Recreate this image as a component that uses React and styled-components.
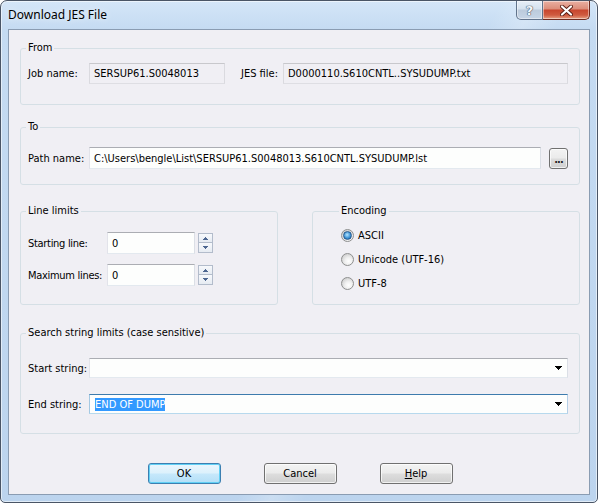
import React from "react";
import styled, { createGlobalStyle } from "styled-components";

const UI_FONT = `Tahoma, "DejaVu Sans Condensed", "Liberation Sans", sans-serif`;

const GlobalStyle = createGlobalStyle`
  html, body {
    margin: 0;
    padding: 0;
    background: #ffffff;
  }
  * {
    box-sizing: border-box;
  }
`;

const Window = styled.div`
  width: 598px;
  height: 503px;
  display: flex;
  flex-direction: column;
  padding: 0 7px 7px;
  border: 1px solid #4a5566;
  border-radius: 7px 7px 5px 5px;
  background:
    linear-gradient(118deg, transparent 58%, rgba(255, 255, 255, 0.22) 62%, transparent 66%),
    linear-gradient(180deg, #d4e6f8 0px, #c5dbf2 28px, #bcd4ee 100%);
  box-shadow: inset 0 0 0 1px rgba(255, 255, 255, 0.55);
  overflow: hidden;
`;

const TitleBar = styled.div`
  height: 28px;
  display: flex;
  justify-content: space-between;
  align-items: flex-start;
`;

const Title = styled.div`
  padding-top: 6px;
  font-family: "Noto Sans", "Open Sans", sans-serif;
  font-size: 12px;
  line-height: 16px;
  color: #000;
  text-shadow: 0 0 6px rgba(255, 255, 255, 0.9);
`;

const CaptionGroup = styled.div`
  display: flex;
`;

const CaptionButton = styled.div`
  width: ${(p) => p.$w}px;
  height: 19px;
  display: flex;
  align-items: center;
  justify-content: center;
  border: 1px solid ${(p) => (p.$danger ? "#6e2b20" : "#61738b")};
  border-top: none;
  border-left: ${(p) => (p.$danger ? "none" : "1px solid #61738b")};
  border-radius: ${(p) => (p.$danger ? "0 0 5px 0" : "0 0 0 5px")};
  background: ${(p) =>
    p.$danger
      ? "linear-gradient(180deg, #eab0a2 0%, #dd8f7c 42%, #c8472f 52%, #cf5b40 78%, #e7a184 100%)"
      : "linear-gradient(180deg, #e6eef7 0%, #d6e2ef 42%, #bccbdc 52%, #c6d5e6 100%)"};
  box-shadow: inset 0 0 0 1px rgba(255, 255, 255, 0.45);
`;

const HelpGlyph = styled.span`
  font-family: "DejaVu Sans", sans-serif;
  font-weight: bold;
  font-size: 13px;
  line-height: 13px;
  color: #f4f7fb;
  text-shadow: 0 0 1px #46566b, 0 0 1px #46566b, 0 0 1px #46566b;
`;

const Client = styled.div`
  flex: 1;
  display: flex;
  flex-direction: column;
  padding: 11px 9px 0 11px;
  background: #f0eff4;
  border: 1px solid #8a9cb2;
  font-family: ${UI_FONT};
  font-size: 11px;
  color: #000;
`;

const Group = styled.fieldset`
  margin: ${(p) => p.$top || 0}px 0 0;
  padding: ${(p) => p.$pad};
  min-width: 0;
  border: 1px solid #d5dfe5;
  border-radius: 3px;
  display: flex;
  flex-direction: column;
  gap: ${(p) => p.$gap || 0}px;
`;

const Legend = styled.legend`
  padding: 0 2px;
  margin-left: -2px;
  line-height: 14px;
  font-weight: 400;
`;

const Row = styled.div`
  display: flex;
  align-items: center;
`;

const Label = styled.span`
  flex: none;
  width: ${(p) => p.$w}px;
  margin-left: ${(p) => p.$ml || 0}px;
  white-space: nowrap;
  letter-spacing: ${(p) => (p.$tight ? "-0.3px" : "0")};
`;

const TextBox = styled.div`
  flex: ${(p) => (p.$w ? "none" : 1)};
  width: ${(p) => (p.$w ? `${p.$w}px` : "auto")};
  height: ${(p) => p.$h || 22}px;
  display: flex;
  align-items: center;
  padding: 0 4px;
  white-space: nowrap;
  overflow: hidden;
  background: ${(p) => (p.$readOnly ? "#f0eff4" : "#fdfefd")};
  border: 1px solid;
  border-color: ${(p) =>
    p.$readOnly ? "#c8c8cc #dadadf #dedee3 #dadadf" : "#abadb3 #dbdfe6 #e3e9ef #e2e3ea"};
`;

const Combo = styled.div`
  flex: 1;
  height: 20px;
  display: flex;
  align-items: center;
  padding: 0 5px 0 5px;
  background: #fdfefd;
  border: 1px solid;
  border-color: ${(p) =>
    p.$focused ? "#3d7bad #b5cfe7 #b7d9ed #a4c9e3" : "#abadb3 #dbdfe6 #e3e9ef #e2e3ea"};
`;

const ComboText = styled.span`
  flex: 1;
  white-space: nowrap;
`;

const Selection = styled.span`
  background: #3399ff;
  color: #fff;
  line-height: 13px;
  display: inline-block;
`;

const SmallButton = styled.div`
  flex: none;
  width: 19px;
  height: 21px;
  margin-left: 8px;
  display: flex;
  align-items: flex-end;
  justify-content: center;
  padding-bottom: 3px;
  line-height: 11px;
  font-weight: bold;
  letter-spacing: -1px;
  color: #222;
  border: 1px solid #707070;
  border-radius: 3px;
  background: linear-gradient(180deg, #f3f3f3 0%, #ebebeb 48%, #dddddd 52%, #cfcfcf 100%);
  box-shadow: inset 0 0 0 1px rgba(255, 255, 255, 0.7);
`;

const Columns = styled.div`
  display: grid;
  grid-template-columns: 258px 1fr;
  column-gap: 34px;
  margin-top: 19px;
`;

const Spinner = styled.div`
  display: flex;
  flex-direction: column;
  margin-left: 3px;
`;

const SpinButton = styled.div`
  width: 15px;
  height: 10px;
  display: flex;
  align-items: center;
  justify-content: center;
  border: 1px solid #b3bccb;
  background: linear-gradient(180deg, #f7f9fc 0%, #e6ebf2 100%);
  & + & {
    border-top: none;
  }
`;

const RadioRow = styled.div`
  height: 16px;
  display: flex;
  align-items: center;
`;

const RadioCircle = styled.span`
  flex: none;
  width: 13px;
  height: 13px;
  margin-right: 4px;
  border-radius: 50%;
  border: 1px solid #8e8f8f;
  background: radial-gradient(circle at 60% 65%, #ffffff 0%, #f1f1f1 35%, #cfcfcf 80%, #b8b8b8 100%);
  display: flex;
  align-items: center;
  justify-content: center;

  &::after {
    content: "";
    display: ${(p) => (p.$checked ? "block" : "none")};
    width: 7px;
    height: 7px;
    border-radius: 50%;
    border: 1px solid #2a5a8c;
    background: radial-gradient(circle at 45% 40%, #b8e6ff 0%, #3d94d6 55%, #175a9c 100%);
  }
`;

const ButtonBar = styled.div`
  display: flex;
  justify-content: center;
  gap: 43px;
  margin-top: 29px;
`;

const PushButton = styled.div`
  width: 73px;
  height: 21px;
  display: flex;
  align-items: center;
  justify-content: center;
  border: 1px solid ${(p) => (p.$default ? "#3c7fb1" : "#707070")};
  border-radius: 3px;
  background: ${(p) =>
    p.$default
      ? "linear-gradient(180deg, #eaf6fd 0%, #dcf1fc 48%, #c6e8fb 52%, #b3dff7 100%)"
      : "linear-gradient(180deg, #f3f3f3 0%, #ebebeb 48%, #dddddd 52%, #cfcfcf 100%)"};
  box-shadow: ${(p) =>
    p.$default ? "inset 0 0 0 1px #61d0f5" : "inset 0 0 0 1px rgba(255, 255, 255, 0.7)"};
`;

const DropArrow = () => (
  <svg width="7" height="4" viewBox="0 0 7 4" shapeRendering="crispEdges">
    <path d="M0 0h7v1h-1v1h-1v1h-1v1h-1v-1h-1v-1h-1v-1h-1z" fill="#000" />
  </svg>
);

const SpinArrow = ({ up }) => (
  <svg width="5" height="3" viewBox="0 0 5 3" shapeRendering="crispEdges">
    <path d={up ? "M2 0h1v1h1v1h1v1h-5v-1h1v-1h1z" : "M0 0h5v1h-1v1h-1v1h-1v-1h-1v-1h-1z"} fill="#4d6690" />
  </svg>
);

const CloseGlyph = () => (
  <svg width="13" height="11" viewBox="0 0 13 11">
    <path d="M2 1.5L11 9.5M11 1.5L2 9.5" stroke="#5b2016" strokeWidth="4" strokeLinecap="round" />
    <path d="M2 1.5L11 9.5M11 1.5L2 9.5" stroke="#ffffff" strokeWidth="2.2" strokeLinecap="round" />
  </svg>
);

const NumberField = ({ label, value }) => (
  <Row>
    <Label $w={79} $tight>{label}</Label>
    <TextBox $w={88}>{value}</TextBox>
    <Spinner>
      <SpinButton>
        <SpinArrow up />
      </SpinButton>
      <SpinButton>
        <SpinArrow />
      </SpinButton>
    </Spinner>
  </Row>
);

const Radio = ({ label, checked }) => (
  <RadioRow>
    <RadioCircle $checked={checked} />
    <span>{label}</span>
  </RadioRow>
);

const App = () => {
  return (
    <>
      <GlobalStyle />
      <Window>
        <TitleBar>
          <Title>Download JES File</Title>
          <CaptionGroup>
            <CaptionButton $w={27}>
              <HelpGlyph>?</HelpGlyph>
            </CaptionButton>
            <CaptionButton $w={47} $danger>
              <CloseGlyph />
            </CaptionButton>
          </CaptionGroup>
        </TitleBar>

        <Client>
          <Group $pad="8px 11px 20px 7px">
            <Legend>From</Legend>
            <Row>
              <Label $w={61}>Job name:</Label>
              <TextBox $w={136} $h={21} $readOnly>SERSUP61.S0048013</TextBox>
              <Label $w={42} $ml={16}>JES file:</Label>
              <TextBox $h={21} $readOnly>D0000110.S610CNTL..SYSUDUMP.txt</TextBox>
            </Row>
          </Group>

          <Group $top={15} $pad="13px 11px 15px 7px">
            <Legend>To</Legend>
            <Row>
              <Label $w={61}>Path name:</Label>
              <TextBox>C:\Users\bengle\List\SERSUP61.S0048013.S610CNTL.SYSUDUMP.lst</TextBox>
              <SmallButton>...</SmallButton>
            </Row>
          </Group>

          <Columns>
            <Group $pad="14px 7px 18px 7px" $gap={10}>
              <Legend>Line limits</Legend>
              <NumberField label="Starting line:" value="0" />
              <NumberField label="Maximum lines:" value="0" />
            </Group>
            <Group $pad="9px 7px 0 28px" $gap={8}>
              <Legend>Encoding</Legend>
              <Radio label="ASCII" checked />
              <Radio label="Unicode (UTF-16)" />
              <Radio label="UTF-8" />
            </Group>
          </Columns>

          <Group $top={21} $pad="18px 11px 19px 7px" $gap={16}>
            <Legend>Search string limits (case sensitive)</Legend>
            <Row>
              <Label $w={61}>Start string:</Label>
              <Combo>
                <ComboText />
                <DropArrow />
              </Combo>
            </Row>
            <Row>
              <Label $w={61}>End string:</Label>
              <Combo $focused>
                <ComboText>
                  <Selection>END OF DUMP</Selection>
                </ComboText>
                <DropArrow />
              </Combo>
            </Row>
          </Group>

          <ButtonBar>
            <PushButton $default>OK</PushButton>
            <PushButton>Cancel</PushButton>
            <PushButton>
              <span>
                <u>H</u>elp
              </span>
            </PushButton>
          </ButtonBar>
        </Client>
      </Window>
    </>
  );
};

export default App;
